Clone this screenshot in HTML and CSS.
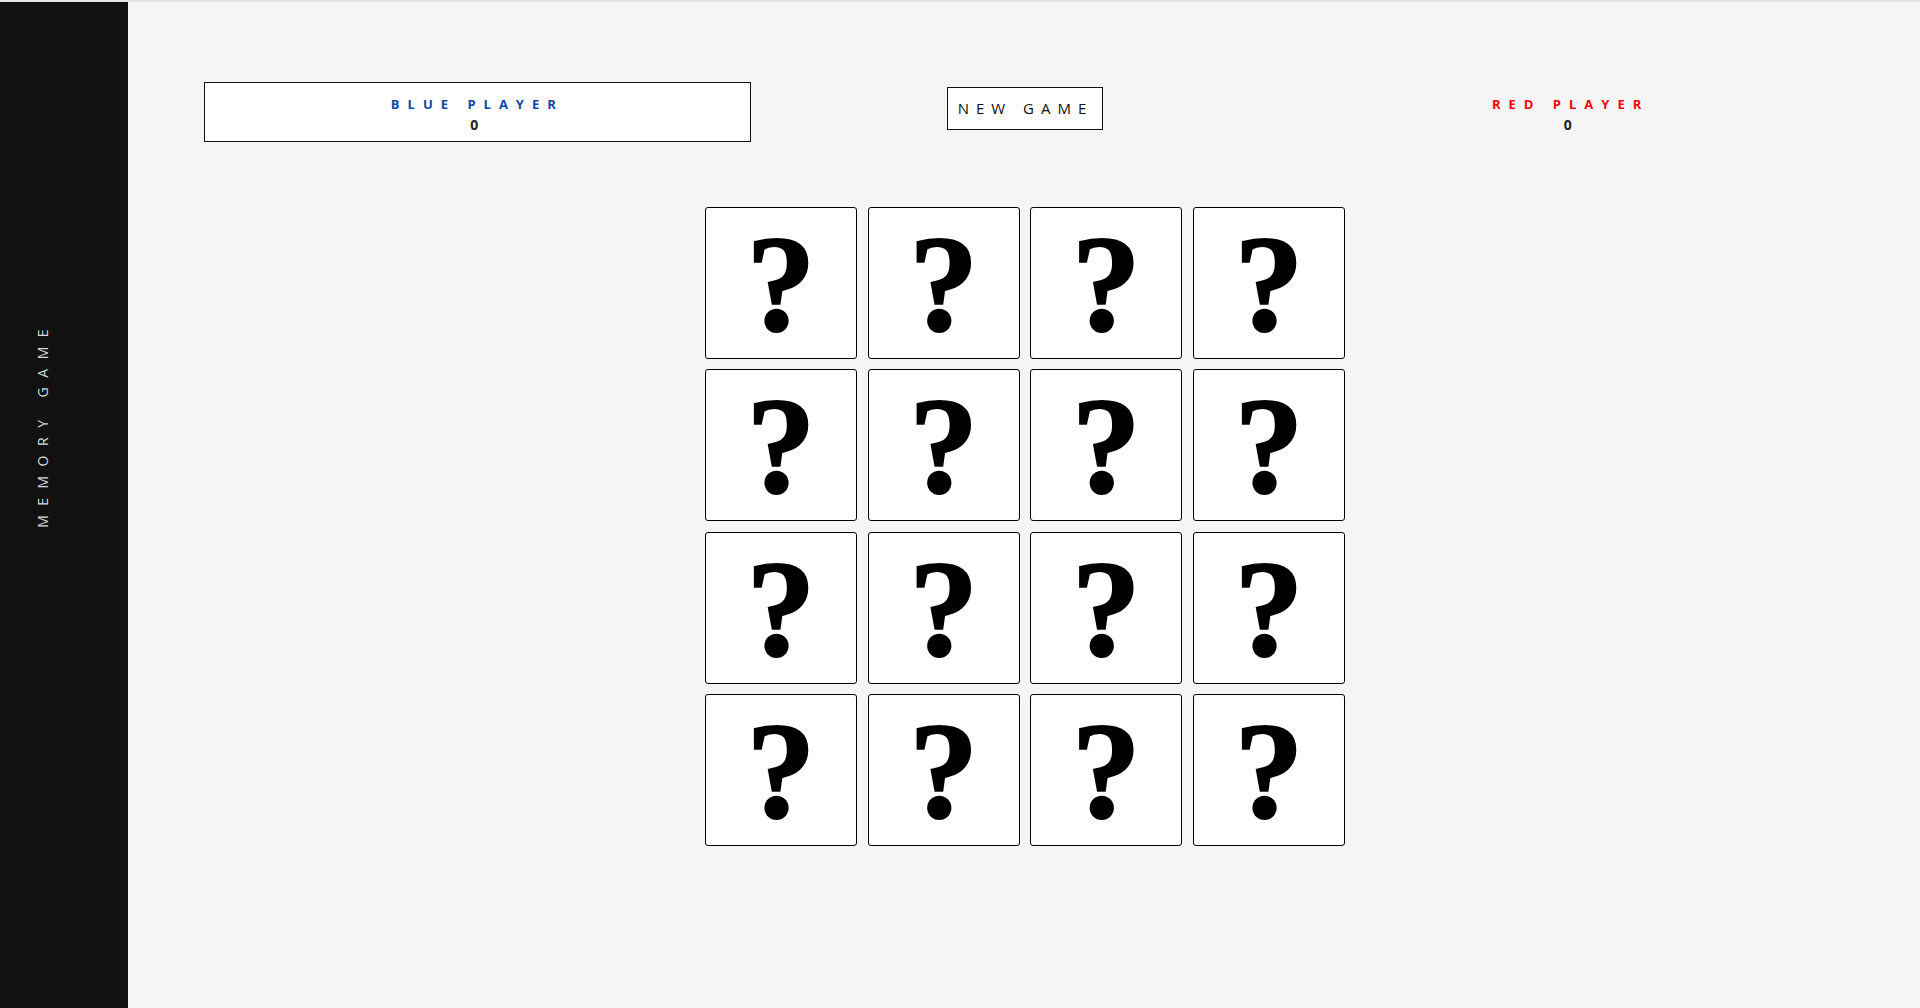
FILE: index.html
```html
<!DOCTYPE html>
<html lang="en">
<head>
<meta charset="utf-8">
<title>Memory Game</title>
<link rel="stylesheet" href="styles.css">
</head>
<body>
<div class="app">
  <aside class="sidebar">
    <h1 class="sidebar-title">MEMORY GAME</h1>
  </aside>
  <main class="main">
    <header class="scoreboard">
      <div class="player player-blue active">
        <div class="player-name">BLUE PLAYER</div>
        <div class="player-score">0</div>
      </div>
      <div class="controls">
        <button class="btn">NEW GAME</button>
      </div>
      <div class="player player-red">
        <div class="player-name">RED PLAYER</div>
        <div class="player-score">0</div>
      </div>
    </header>
    <section class="board">
      <div class="card"><span class="mark">?</span></div>
      <div class="card"><span class="mark">?</span></div>
      <div class="card"><span class="mark">?</span></div>
      <div class="card"><span class="mark">?</span></div>
      <div class="card"><span class="mark">?</span></div>
      <div class="card"><span class="mark">?</span></div>
      <div class="card"><span class="mark">?</span></div>
      <div class="card"><span class="mark">?</span></div>
      <div class="card"><span class="mark">?</span></div>
      <div class="card"><span class="mark">?</span></div>
      <div class="card"><span class="mark">?</span></div>
      <div class="card"><span class="mark">?</span></div>
      <div class="card"><span class="mark">?</span></div>
      <div class="card"><span class="mark">?</span></div>
      <div class="card"><span class="mark">?</span></div>
      <div class="card"><span class="mark">?</span></div>
    </section>
  </main>
</div>
</body>
</html>
```
FILE: styles.css
```css
* {
  box-sizing: border-box;
}

html, body {
  margin: 0;
  padding: 0;
}

body {
  background: #f5f5f5;
  border-top: 2px solid #e3e3e3;
  font-family: "Open Sans", "Liberation Sans", sans-serif;
  color: #222;
}

.app {
  display: flex;
  min-height: 1006px;
}

.sidebar {
  width: 128px;
  flex-shrink: 0;
  background: #111;
  display: flex;
  align-items: flex-start;
  padding-top: 318px;
  padding-left: 33px;
}

.sidebar-title {
  margin: 0;
  writing-mode: vertical-rl;
  transform: rotate(180deg);
  font-size: 14px;
  font-weight: 400;
  letter-spacing: 9.5px;
  color: #d8d8d8;
  line-height: 19px;
}

.main {
  flex: 1;
  padding: 80px 76px 0 76px;
}

.scoreboard {
  display: grid;
  grid-template-columns: repeat(3, 1fr);
  align-items: start;
}

.player {
  height: 60px;
  border: 1px solid transparent;
  text-align: center;
  padding-top: 12px;
}

.player.active {
  background: #fff;
  border-color: #111;
}

.player-name {
  font-size: 13px;
  font-weight: 700;
  letter-spacing: 8px;
  line-height: 18px;
}

.player-blue .player-name {
  color: #0d47a1;
}

.player-red .player-name {
  color: #ff0000;
}

.player-score {
  margin-top: 3px;
  padding-right: 6px;
  font-size: 14px;
  font-weight: 700;
  line-height: 18px;
  color: #222;
}

.controls {
  display: flex;
  justify-content: center;
  padding-top: 5px;
  padding-left: 2px;
}

.btn {
  font-family: "Open Sans", "Liberation Sans", sans-serif;
  font-size: 15px;
  font-weight: 400;
  letter-spacing: 7px;
  line-height: 21px;
  color: #111;
  background: #fff;
  border: 1px solid #111;
  padding: 10px 9px 10px 10px;
  margin: 0;
  cursor: pointer;
}

.board {
  margin-top: 65px;
  display: grid;
  grid-template-columns: repeat(4, 152px);
  grid-auto-rows: 152px;
  column-gap: 10.67px;
  row-gap: 10.33px;
  justify-content: center;
  padding-left: 2px;
}

.card {
  background: #fff;
  border: 1px solid #000;
  border-radius: 3px;
  display: flex;
  align-items: center;
  justify-content: center;
}

.mark {
  font-family: "Liberation Serif", "Times New Roman", serif;
  font-weight: 700;
  font-size: 138px;
  line-height: 1;
  color: #000;
  -webkit-text-stroke: 2px #000;
  margin-top: 2px;
}
```
